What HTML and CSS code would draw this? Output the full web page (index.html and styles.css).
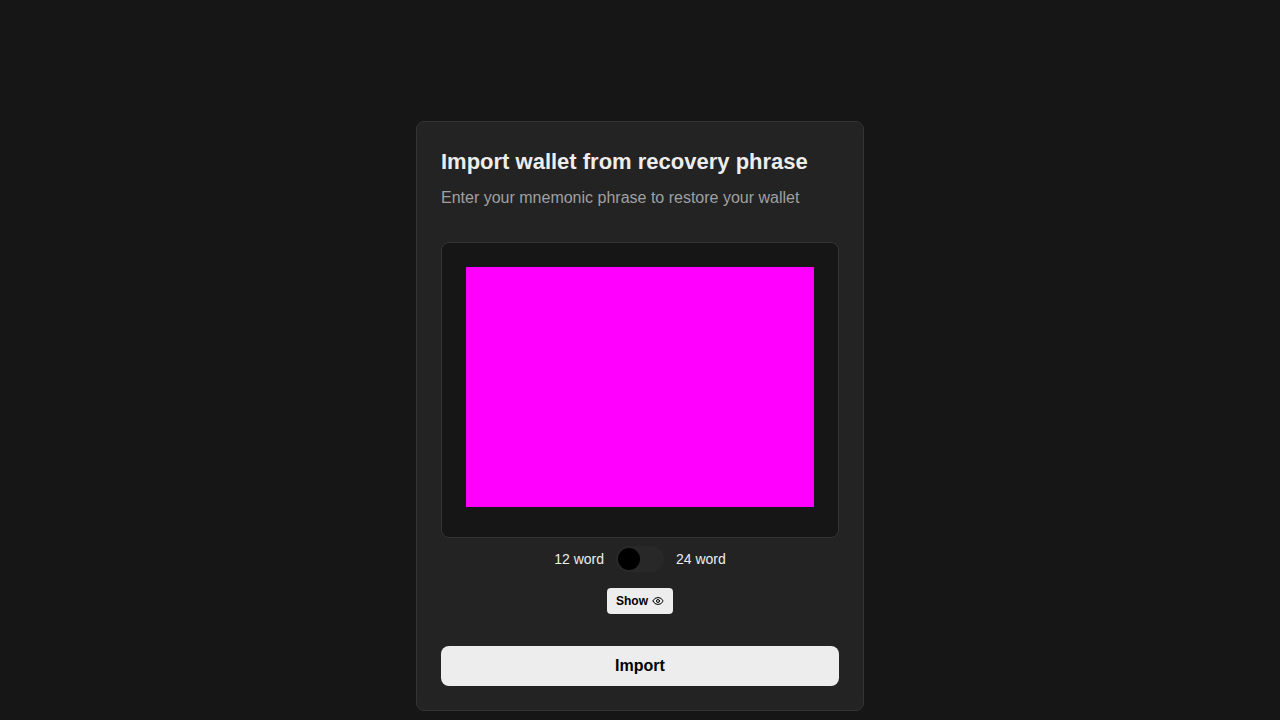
FILE: index.html
```
<!DOCTYPE html>
<html lang="en">
<head>
<meta charset="utf-8">
<meta name="viewport" content="width=device-width, initial-scale=1">
<title>Import wallet</title>
<link rel="stylesheet" href="styles.css">
</head>
<body>
<main class="page">
  <form class="card">
    <header class="card-header">
      <h1 class="title">Import wallet from recovery phrase</h1>
      <p class="subtitle">Enter your mnemonic phrase to restore your wallet</p>
    </header>
    <div class="phrase-box">
      <div class="phrase-area"></div>
    </div>
    <div class="length-row">
      <label for="length">12 word</label>
      <input class="switch" id="length" type="checkbox" role="switch">
      <label for="length">24 word</label>
    </div>
    <button class="show-button" type="button">
      Show
      <svg class="eye" viewBox="0 0 24 24" aria-hidden="true">
        <path d="M2.062 12.348a1 1 0 0 1 0-.696 10.750 10.750 0 0 1 19.876 0 1 1 0 0 1 0 .696 10.750 10.750 0 0 1-19.876 0"/>
        <circle cx="12" cy="12" r="3"/>
      </svg>
    </button>
    <button class="import-button" type="button">Import</button>
  </form>
</main>
</body>
</html>
```
FILE: styles.css
```
* {
  box-sizing: border-box;
}

body {
  margin: 0;
  background: #161616;
  color: #ededed;
  font-family: "Liberation Sans", Arial, sans-serif;
}

.page {
  display: flex;
  justify-content: center;
  padding: 121px 16px 9px;
}

.card {
  display: flex;
  flex-direction: column;
  width: 100%;
  max-width: 448px;
  padding: 24px;
  border: 1px solid #343434;
  border-radius: 8px;
  background: #232323;
}

.card-header {
  display: flex;
  flex-direction: column;
  gap: 8px;
  margin-bottom: 32px;
}

.title {
  margin: 0;
  font-size: 22px;
  line-height: 32px;
}

.subtitle {
  margin: 0;
  color: #a0a0a0;
  font-size: 16px;
  line-height: 24px;
}

.phrase-box {
  padding: 24px 24px 30px;
  border: 1px solid #343434;
  border-radius: 8px;
  background: #161616;
}

.phrase-area {
  height: 240px;
  background: #ff00ff;
}

.length-row {
  display: flex;
  align-items: center;
  justify-content: center;
  gap: 12px;
  margin: 8px 0 16px;
  font-size: 14px;
  line-height: 20px;
}

.switch {
  appearance: none;
  width: 48px;
  height: 26px;
  margin: 0;
  padding: 2px;
  border-radius: 13px;
  background: #282828;
  cursor: pointer;
}

.switch::before {
  content: "";
  display: block;
  width: 22px;
  height: 22px;
  border-radius: 50%;
  background: #000;
}

.switch:checked::before {
  margin-left: auto;
}

.show-button,
.import-button {
  border: 0;
  background: #ededed;
  color: #000;
  font-family: inherit;
  font-weight: 700;
  cursor: pointer;
}

.show-button {
  display: flex;
  align-items: center;
  align-self: center;
  gap: 4px;
  height: 26px;
  margin-bottom: 32px;
  padding: 0 9px;
  border-radius: 4px;
  font-size: 12px;
}

.eye {
  width: 12px;
  height: 12px;
  fill: none;
  stroke: currentColor;
  stroke-width: 2;
  stroke-linecap: round;
  stroke-linejoin: round;
}

.import-button {
  height: 40px;
  border-radius: 8px;
  font-size: 16px;
}
```
